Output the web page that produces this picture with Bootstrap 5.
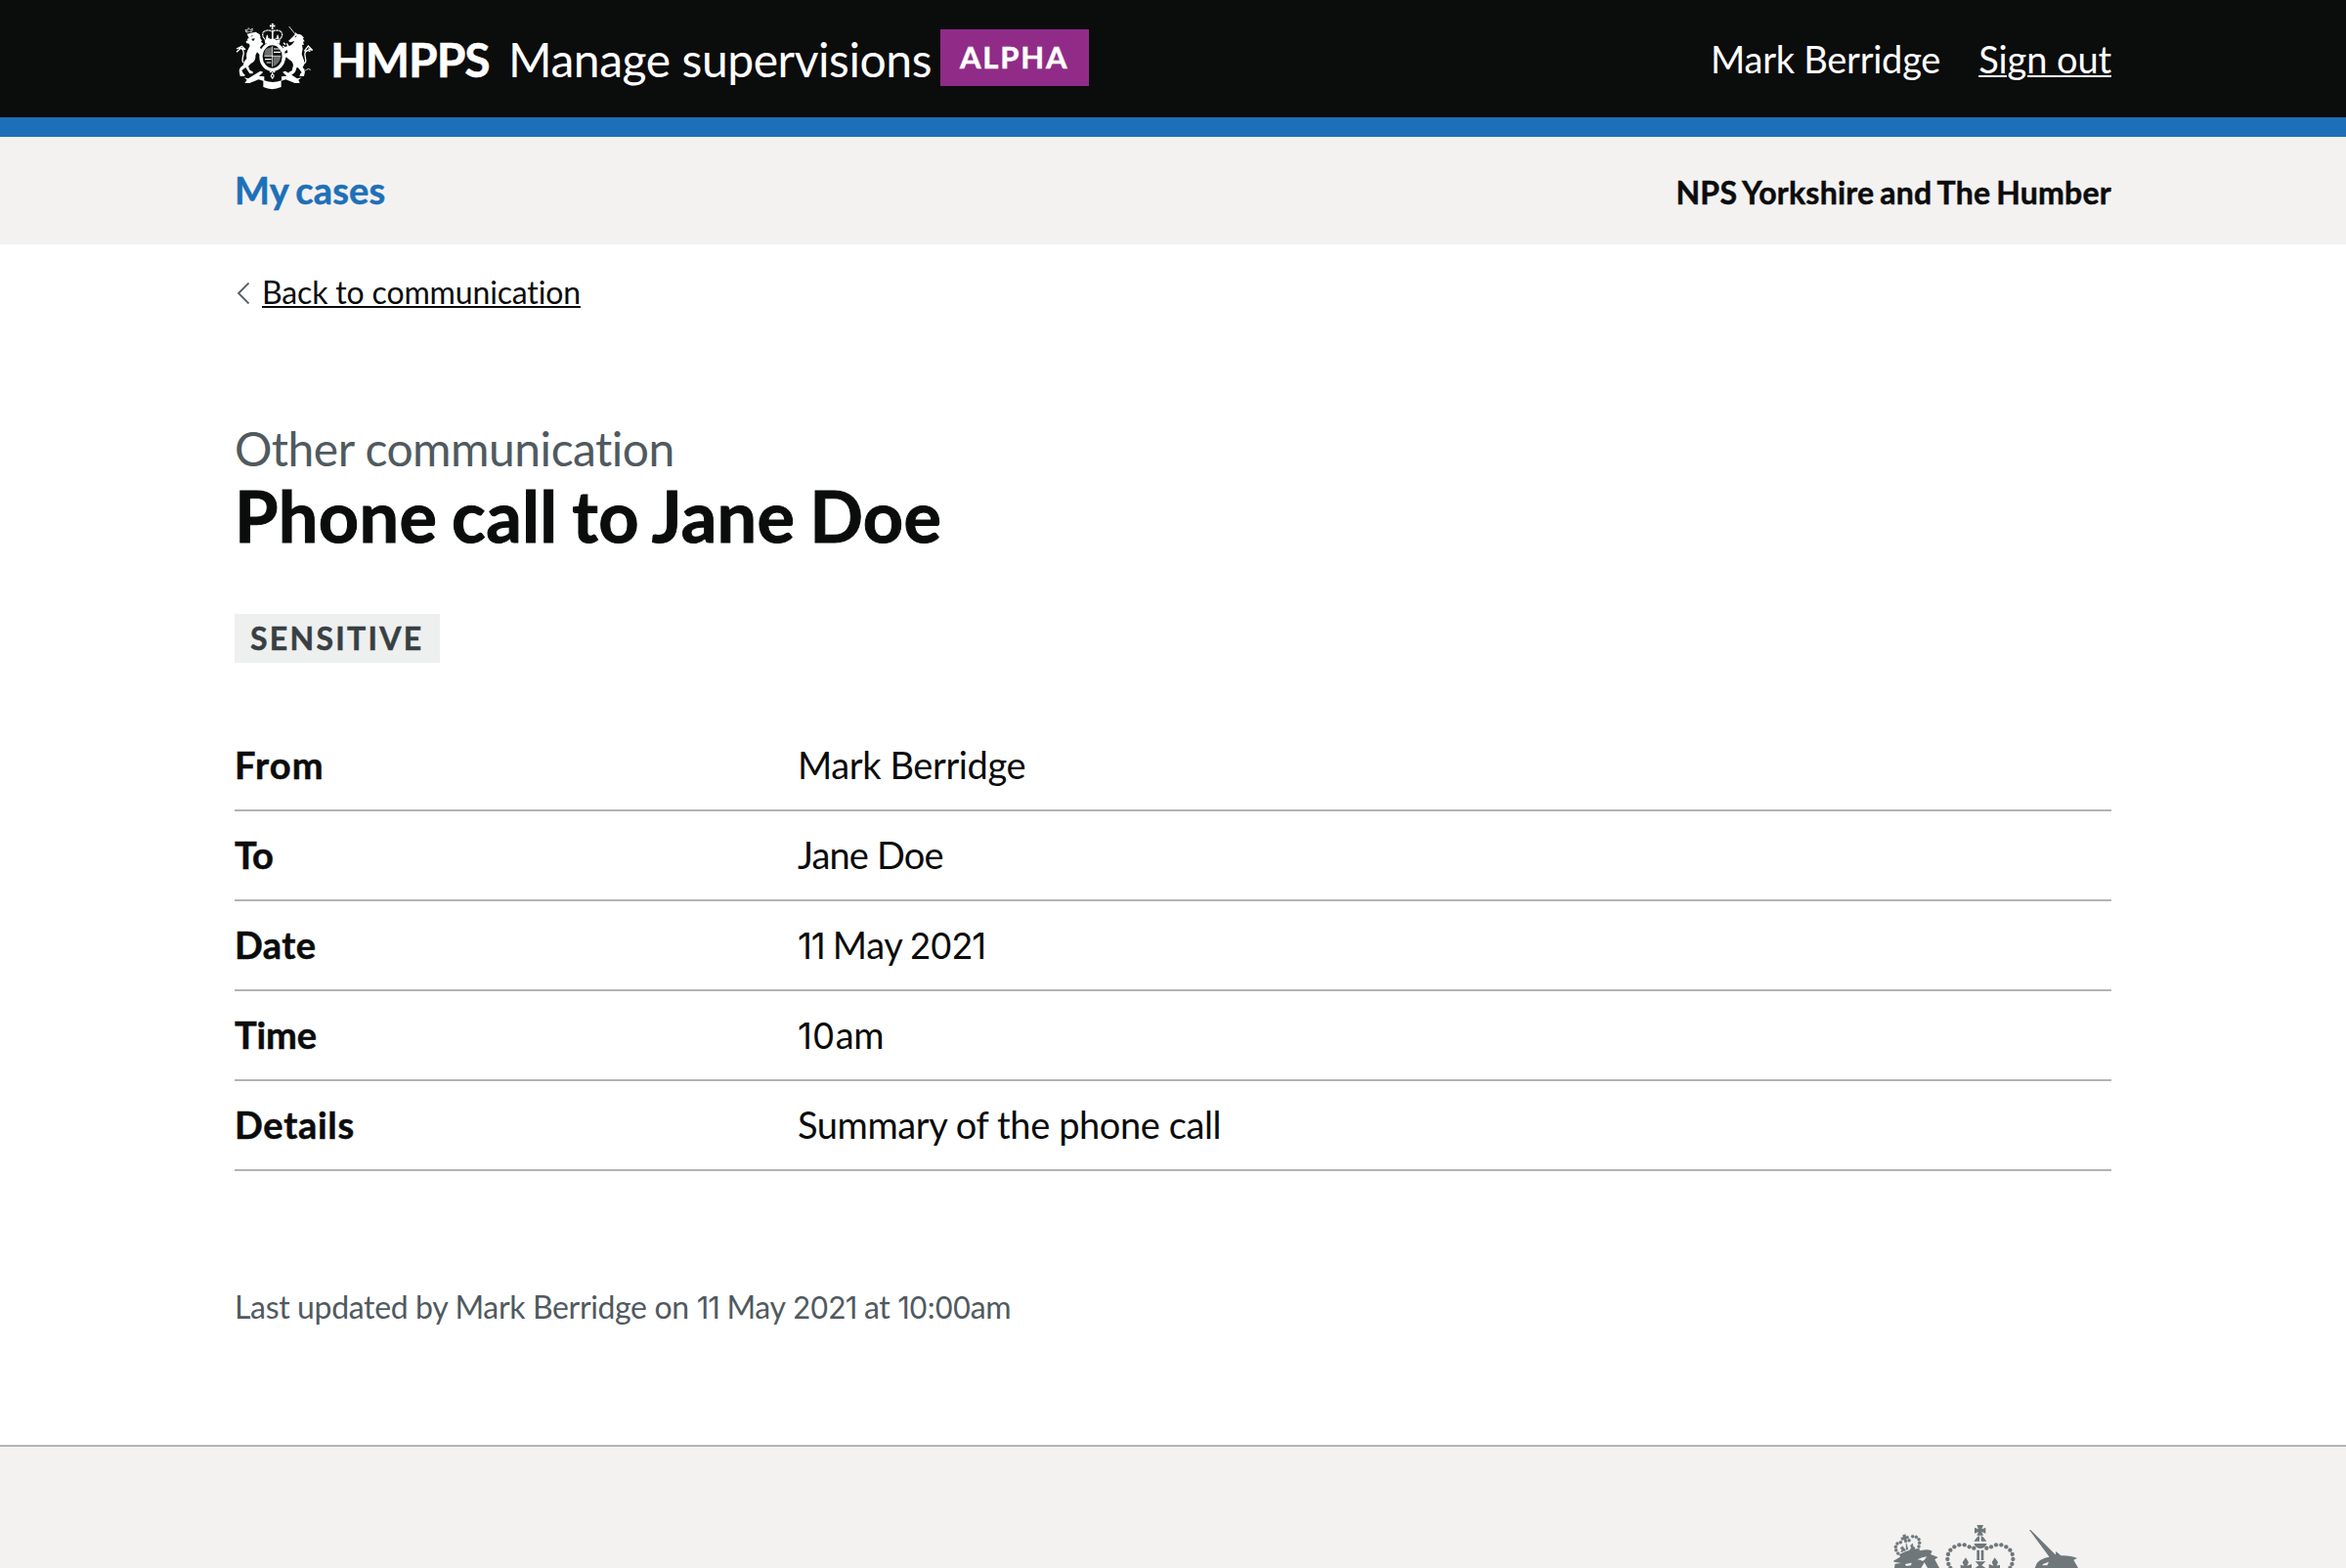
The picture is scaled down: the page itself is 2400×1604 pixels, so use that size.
<!DOCTYPE html>
<html lang="en">
<head>
<meta charset="utf-8">
<meta name="viewport" content="width=device-width, initial-scale=1">
<title>Phone call to Jane Doe - Manage supervisions</title>
<link rel="stylesheet" href="https://cdn.jsdelivr.net/npm/bootstrap@5.3.0/dist/css/bootstrap.min.css">
<style>
body { font-family: Lato, "Noto Sans", sans-serif; font-size: 38px; line-height: 50px; color: #0b0c0c; overflow: hidden; height: 1604px; }
.page-width { width: 1920px; }
.site-header { height: 120px; background: #0b0c0c; }
.blue-bar { height: 20px; background: #1d70b8; }
.crest { width: 80px; height: 70px; margin: 23px 18px 0 0; }
.brand-text { font-size: 48px; line-height: 60px; margin-top: 31px; white-space: nowrap; }
.brand-org { letter-spacing: -1.12px; width: 182px; }
.brand-service { letter-spacing: -.43px; width: 442px; }
.alpha-tag { margin-top: 30px; width: 152px; height: 58px; padding-left: 20px; background: #912b88; font-size: 31px; line-height: 57px; letter-spacing: 1.8px; }
.user-links { gap: 39px; margin-top: 35px; letter-spacing: -.25px; white-space: nowrap; }
.user-links a, .back-link { color: inherit; text-decoration: underline; text-decoration-thickness: 2px; text-underline-offset: 2px; }
.user-links a { letter-spacing: -.1px; }
.subnav { height: 110px; padding-top: 29px; background: #f3f2f1; }
.subnav a { color: #1d70b8; letter-spacing: .15px; word-spacing: -2px; }
.region-name { font-size: 32px; letter-spacing: .23px; word-spacing: -2px; }
.heavier, .summary-row dt, .subnav a, .region-name { -webkit-text-stroke: .5px currentColor; }
.back-row { padding-top: 29px; font-size: 32px; line-height: 40px; letter-spacing: -.15px; }
.chevron { width: 12px; height: 22px; margin: 10px 13px 0 3px; }
.caption-text { margin-top: 110px; font-size: 48px; line-height: 60px; letter-spacing: -.5px; color: #505a5f; }
.page-title { font-size: 72px; line-height: 76px; letter-spacing: .35px; word-spacing: -3px; -webkit-text-stroke: 1px currentColor; }
.sensitive-tag { width: 210px; height: 50px; margin-top: 63px; padding-left: 16px; background: #eeefef; color: #383f43; font-size: 32px; line-height: 49px; letter-spacing: 2.27px; }
.summary { margin-top: 60px; }
.summary-row { height: 92px; padding-top: 19px; border-bottom: 2px solid #b1b4b6; }
.summary-row dt { width: 576px; letter-spacing: .4px; }
.summary-row dd { letter-spacing: -.4px; }
.summary-row:nth-child(1) dt { letter-spacing: 1.1px; }
.summary-row:nth-child(2) dt, .summary-row:nth-child(4) dt { letter-spacing: -.1px; }
.summary-row:nth-child(5) dt { letter-spacing: .7px; }
.summary-row:nth-child(2) dd { letter-spacing: -.84px; }
.summary-row:nth-child(3) dd { word-spacing: -1.5px; }
.digits { font-family: Inter, sans-serif; font-size: .965em; line-height: 1; letter-spacing: -.035em; margin-right: .02em; }
.summary-row:nth-child(4) .digits { letter-spacing: 0; }
.updated { margin-top: 119px; font-size: 32px; line-height: 40px; letter-spacing: -.35px; color: #505a5f; }
.updated .digits { letter-spacing: -.035em; margin-right: 0; word-spacing: -1px; }
.site-footer { margin-top: 121px; height: 126px; border-top: 2px solid #b1b4b6; background: #f3f2f1; }
.footer-crest { width: 230px; height: 54px; margin-top: 70px; fill: #6f777b; }
</style>
<script src="https://cdn.jsdelivr.net/npm/bootstrap@5.3.0/dist/js/bootstrap.bundle.min.js"></script>
</head>
<body>
<header>
  <div class="site-header text-white">
    <div class="page-width mx-auto d-flex align-items-start">
      <svg class="crest flex-shrink-0" viewBox="12 15 240 210" fill="#fff" aria-hidden="true">
        <!-- crown -->
        <path d="M125 18h7l-2 6 6-2v7l-6-2 1 9h-6l1-9-6 2v-7l6 2z"/>
        <path d="M128 43c-12-8-30-3-30 9 0 7 4 10 8 16M128 43c12-8 30-3 30 9 0 7-4 10-8 16" fill="none" stroke="#fff" stroke-width="4" stroke-dasharray="3.5 1"/>
        <path d="M126 38h5v28h-5zM111 52l4 5-1 5h5v6h-12zM145 52l-4 5 1 5h-5v6h12zM104 68q24-7 48 0l-2 12q-22-6-44 0z"/>
        <!-- shield and garter -->
        <ellipse cx="128" cy="120" rx="35" ry="40" fill="none" stroke="#fff" stroke-width="10"/>
        <path d="M108 96l18-6v27h-23q-1-12 5-21zM131 120h23q-3 20-23 30z" opacity=".4"/>
        <path d="M132 96h18M132 106h21M105 128h20M110 138h14" fill="none" stroke="#fff" stroke-width="3.500"/>
        <path d="M128 88v63M103 118h51" fill="none" stroke="#fff" stroke-width="2.500"/>
        <path d="M120 158l16 10M136 158l-16 10M128 168v20" stroke="#fff" stroke-width="4"/>
        <circle cx="128" cy="179" r="6"/><circle cx="128" cy="179" r="2.5" fill="#0b0c0c"/>
        <!-- lion -->
        <path d="M48 45l-3-8 7 3 3-8 5 6 7-4-1 8z" fill="none" stroke="#fff" stroke-width="3" stroke-dasharray="3 1"/>
        <path d="M50 50l27-6 12 8 3 8-2 2 6 8-3 4 7 6-10 11 9 17-4 12-14-14-5 10q2 17-14 25l-8 8 5 12 9 5v6H58L46 153l-12 9 5 10 6 5-5 3H29l-3-16q0-11 12-17 1-13 11-22-2-12 2-22l8-17-3-6-8-2-1-6 6-2-3-4 6-3z"/>
        <path d="M65 66l8-1-4 6zM62 58l6-3" fill="#0b0c0c" stroke="#0b0c0c" stroke-width="2"/>
        <path d="M39 138c-9-9 4-22 0-35-3-8-10-11-14-7M18 96l16-8 11 10-14-4-13 12" fill="none" stroke="#fff" stroke-width="4"/>
        <!-- unicorn -->
        <path d="M179 27l20 25" stroke="#fff" stroke-width="2.5"/>
        <path d="M190 59l8-8 1-6 5 5q15 0 21 13l-4 1 6 9-5 1 3 9-6 1 2 12-3 16 5 14q7 14-2 26l7 14-3 14h-14l3-8 4-3-9-14-6-3-5 15-12 10-11-2 4-8 9-4 4-17q-1-12-13-18l-9-7-4 11-6-1 2-19 13-5-2-8-9 7-6-3 3-11 14-5q12 1 21-15l-13 4-6-4z"/>
        <path d="M197 59l5-2" stroke="#0b0c0c" stroke-width="3"/>
        <path d="M221 144c18-7 4-23 7-35 3-9 10-10 16-5M226 103l12-16 13 13-13-4M168 83l-6-6M166 92l-6-5M177 88l-5-9" fill="none" stroke="#fff" stroke-width="4"/>
        <path d="M206 151l8 8 8-3 8 6 9-5 6 4" fill="none" stroke="#fff" stroke-width="3" stroke-dasharray="5 2"/>
        <!-- scroll -->
        <path d="M41 184l13 3 37-23 9 3-13 12 16 2v12q26 10 53 0v-12l16-2-13-12 9-3 36 23 14-3-10 7 4 10h-15l-28-11-14 4v19q-28 13-55 0v-19l-14-4-28 11H43l7-10z"/>
      </svg>
      <div class="brand-text brand-org fw-bold heavier">HMPPS</div>
      <div class="brand-text brand-service">Manage supervisions</div>
      <div class="alpha-tag fw-bold heavier">ALPHA</div>
      <nav class="user-links d-flex ms-auto"><span>Mark Berridge</span><a href="#">Sign out</a></nav>
    </div>
  </div>
  <div class="blue-bar"></div>
  <div class="subnav">
    <div class="page-width mx-auto d-flex justify-content-between align-items-baseline fw-bold">
      <a href="#" class="text-decoration-none">My cases</a>
      <span class="region-name">NPS Yorkshire and The Humber</span>
    </div>
  </div>
</header>
<main class="page-width mx-auto">
  <div class="back-row d-flex align-items-start">
    <svg class="chevron" viewBox="0 0 12 22" fill="none" stroke="#505a5f" stroke-width="1.8" aria-hidden="true"><path d="M11.5 .5L1 11l10.500 10.500"/></svg>
    <a href="#" class="back-link">Back to communication</a>
  </div>
  <div class="caption-text">Other communication</div>
  <h1 class="page-title fw-bold mb-0">Phone call to Jane Doe</h1>
  <div class="sensitive-tag fw-bold heavier">SENSITIVE</div>
  <dl class="summary mb-0">
    <div class="summary-row d-flex"><dt>From</dt><dd class="m-0">Mark Berridge</dd></div>
    <div class="summary-row d-flex"><dt>To</dt><dd class="m-0">Jane Doe</dd></div>
    <div class="summary-row d-flex"><dt>Date</dt><dd class="m-0"><span class="digits">11</span> May <span class="digits">2021</span></dd></div>
    <div class="summary-row d-flex"><dt>Time</dt><dd class="m-0"><span class="digits">10</span>am</dd></div>
    <div class="summary-row d-flex"><dt>Details</dt><dd class="m-0">Summary of the phone call</dd></div>
  </dl>
  <p class="updated mb-0">Last updated by Mark Berridge on <span class="digits">11</span> May <span class="digits">2021</span> at <span class="digits">10:00</span>am</p>
</main>
<footer class="site-footer">
  <div class="page-width mx-auto d-flex justify-content-end">
    <svg class="footer-crest" viewBox="0 0 690 162" aria-hidden="true">
      <!-- lion's crown and head -->
      <g stroke="#6f777b" stroke-width="1.500">
        <circle cx="28" cy="97" r="4.500"/><circle cx="29" cy="107" r="4.500"/><circle cx="35" cy="117" r="4.500"/><circle cx="33" cy="87" r="4.500"/><circle cx="43" cy="83" r="4.500"/><circle cx="69" cy="77" r="4.500"/><circle cx="80" cy="65" r="4.500"/><circle cx="91" cy="67" r="4.500"/><circle cx="99" cy="74" r="4.500"/><circle cx="101" cy="85" r="4.500"/><circle cx="99" cy="96" r="4.500"/>
        <path d="M50 61l8-2 1 7 7-3 2 8-8 1 3 10-7 2-3-10-6 3-3-8 7-1zM60 86l6 18-6 2zM49 95l5 7 5 6-15 5 3-8-5-4zM80 87l1 9 6 3-2 6-13 2 4-8-3-6zM39 121q31-17 61-18l2 12q-30 2-57 16z"/>
      </g>
      <path d="M21 140Q60 114 110 107q18-3 30 3l-5 10 23 9-10 7 14 26h-36l-10-17-10 17H24l2-13 19-2-22-4z"/>
      <path d="M94 136q15-7 30-9l-8 10q-6 6-12 0zM57 150l20-4-2 8-15 2z" fill="#f3f2f1"/>
      <!-- royal crown -->
      <path d="M277 30h20l-5 13 12-5v18l-12-5 5 11h-20l5-11-12 5V38l12 5zM268 80l9-12 8-5v17zM290 63l8 5 9 12h-17zM268 87h40q-6 15-20 15t-20-15zM277 107h8v31h-8zM290 107h8v31h-8zM272 142h32l-12 12 12 8h-32l11-8z"/>
      <g id="arch">
        <circle cx="268" cy="101" r="6.500"/><circle cx="254" cy="97" r="6.500"/><circle cx="239" cy="91" r="6.500"/><circle cx="223" cy="91" r="6.500"/><circle cx="208" cy="97" r="6.500"/><circle cx="196" cy="107" r="6.500"/><circle cx="189" cy="120" r="6.500"/><circle cx="187" cy="135" r="6.500"/><circle cx="190" cy="150" r="6.500"/><circle cx="196" cy="162" r="6.500"/>
        <path d="M243 130q5 9 9 14l-5 11 14-5v12h-34v-10l10 3-4-11z"/>
      </g>
      <use href="#arch" transform="translate(575 0) scale(-1 1)"/>
      <!-- unicorn -->
      <path d="M438 45h4l79 79-17 10zM462 146q20-20 56-20l2-15 15 13q29-1 50 8l-11 5 14 25H455z"/>
      <path d="M480 150l18-7-5 11h-15z" fill="#f3f2f1"/>
    </svg>
  </div>
</footer>
</body>
</html>
